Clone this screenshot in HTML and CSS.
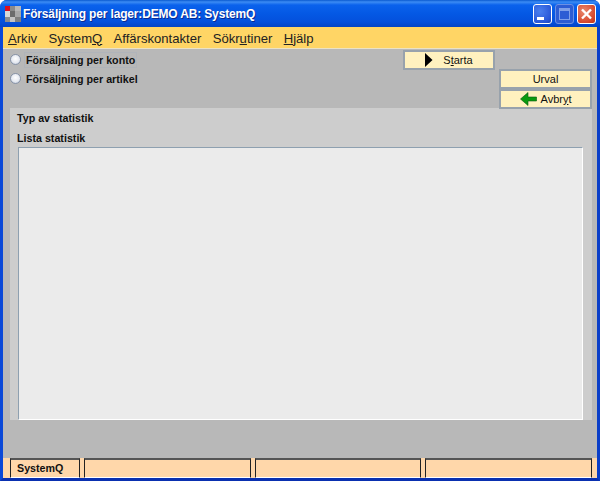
FILE: index.html
```html
<!DOCTYPE html>
<html lang="sv">
<head>
<meta charset="utf-8">
<title>Försäljning per lager</title>
<link rel="stylesheet" href="styles.css">
</head>
<body>
<div class="window">
  <header class="titlebar">
    <svg class="appicon" width="16" height="16" viewBox="0 0 16 16">
      <rect width="16" height="16" fill="#c4c4c4"/>
      <rect x="0" y="0" width="5" height="5" fill="#d81020"/>
      <rect x="5" y="0" width="5" height="5" fill="#8a8a8a"/>
      <rect x="10" y="0" width="6" height="5" fill="#b8b8b8"/>
      <rect x="0" y="5" width="5" height="6" fill="#d8d8d8"/>
      <rect x="5" y="5" width="5" height="6" fill="#6c6c6c"/>
      <rect x="10" y="5" width="6" height="6" fill="#a8a8a8"/>
      <rect x="0" y="11" width="5" height="5" fill="#8c8c8c"/>
      <rect x="5" y="11" width="5" height="5" fill="#c4c4c4"/>
      <rect x="10" y="11" width="6" height="5" fill="#808080"/>
    </svg>
    <span class="title">Försäljning per lager:DEMO AB: SystemQ</span>
    <div class="winbtns">
      <span class="winbtn"><svg width="19" height="20" viewBox="0 0 19 20"><rect x="4" y="13" width="7" height="3" fill="#fff"/></svg></span>
      <span class="winbtn disabled"><svg width="19" height="20" viewBox="0 0 19 20"><path d="M4 4h11v12H4z M5 7v8h9V7z" fill="#7f9fe8" fill-rule="evenodd"/></svg></span>
      <span class="winbtn close"><svg width="19" height="20" viewBox="0 0 19 20"><path d="M5 5.500L14 14.500M14 5.500L5 14.500" stroke="#fff" stroke-width="2.400"/></svg></span>
    </div>
  </header>
  <nav class="menubar">
    <span><u>A</u>rkiv</span>
    <span>System<u>Q</u></span>
    <span>Affärskontakter</span>
    <span>Sökr<u>u</u>tiner</span>
    <span><u>H</u>jälp</span>
  </nav>
  <main class="content">
    <section class="top">
      <div class="radios">
        <label class="radio"><i class="dot"></i><span class="focus">Försäljning per konto</span></label>
        <label class="radio"><i class="dot"></i><span>Försäljning per artikel</span></label>
      </div>
      <button class="btn starta"><svg width="8" height="14" viewBox="0 0 8 14"><path d="M0 0L7.500 7L0 14z" fill="#000"/></svg><span>S<u>t</u>arta</span></button>
      <div class="stack">
        <button class="btn">Urval</button>
        <button class="btn"><svg width="17" height="14" viewBox="0 0 17 14"><path d="M0.500 7L8 0.500V5H16.500V9H8V13.500z" fill="#0a9a10" stroke="#075a10" stroke-width=".6"/></svg><span>Avbr<u>y</u>t</span></button>
      </div>
    </section>
    <section class="panel">
      <div class="label first">Typ av statistik</div>
      <div class="label">Lista statistik</div>
      <div class="list"></div>
    </section>
    <footer class="status">
      <div class="cell">SystemQ</div>
      <div class="cell"></div>
      <div class="cell"></div>
      <div class="cell"></div>
    </footer>
  </main>
</div>
</body>
</html>
```
FILE: styles.css
```css
* { box-sizing: border-box; }
html, body { margin: 0; padding: 0; }
body { width: 600px; height: 481px; overflow: hidden; font-family: "Liberation Sans", Arial, sans-serif; }
.window {
  width: 600px; height: 481px; display: flex; flex-direction: column;
  background: #0a4be0;
  border-left: 3px solid #0a48d8; border-right: 3px solid #0a3ec8; border-bottom: 3px solid #0a30b0;
  border-radius: 7px 7px 0 0;
}
.titlebar {
  height: 27px; margin: 0 -3px; padding: 1px 4px 0 5px; display: flex; align-items: center; flex: none;
  border-radius: 7px 7px 0 0;
  background: linear-gradient(#0a5ad0 0, #3c8cf4 2px, #0a62ec 5px, #0458e4 14px, #0450dc 22px, #0444c4 27px);
}
.appicon { flex: none; margin-right: 2px; }
.title { color: #fff; font: bold 12px "Liberation Sans", sans-serif; text-shadow: 1px 1px 0 #0a2a90; white-space: nowrap; letter-spacing: -0.16px; }
.winbtns { margin-left: auto; display: flex; gap: 3px; }
.winbtn {
  width: 19px; height: 20px; display: block; border: 1px solid #fff; border-radius: 3px;
  background: radial-gradient(circle at 35% 35%, #4a80ee, #2a58d8 70%, #1c44b8);
}
.winbtn svg { display: block; margin: -1px; }
.winbtn.disabled { border-color: #6c90e4; background: #2c5cd4; }
.winbtn.close { background: radial-gradient(circle at 35% 35%, #e88a70, #d8482c 70%, #b83418); }
.menubar {
  height: 22px; flex: none; background: #ffd565; display: flex; align-items: center; gap: 11.3px;
  padding: 1px 0 0 5px; font-size: 13.1px; color: #222; border-bottom: 1px solid #ece2c4;
}
.content { flex: 1; min-height: 0; background: #b8b8b8; display: flex; flex-direction: column; }
.top { height: 59px; flex: none; display: flex; padding-left: 7px; position: relative; z-index: 1; }
.radios { display: flex; flex-direction: column; gap: 6px; padding-top: 4px; width: 393px; }
.radio { display: flex; align-items: center; height: 13px; font: bold 10.7px "Liberation Sans", sans-serif; color: #111; }
.dot {
  width: 11px; height: 11px; border-radius: 50%; border: 1px solid #8894a8; margin-right: 5px; flex: none;
  background: radial-gradient(circle at 50% 40%, #fff, #e4e8f0 60%, #a8b4cc);
}
.focus { outline: 1px solid #b0b4ba; outline-offset: 1px; }
.btn {
  width: 92px; height: 20px; margin: 0; padding: 0; display: flex; align-items: center; justify-content: center; gap: 4px;
  background: #fff1bf; border: 2px solid #98a2ac; font: 11px "Liberation Sans", sans-serif; color: #111;
}
.starta { margin-top: 1px; gap: 10px; flex: none; }
.stack { display: flex; flex-direction: column; margin: 20px 0 0 4px; height: 40px; }
.stack .btn { width: 93px; flex: none; }
.panel {
  height: 312px; flex: none; margin: 0 5px 0 7px; padding: 4px 8px 0 7px; background: #cdcdcd;
  display: flex; flex-direction: column;
}
.label { font: bold 10.7px "Liberation Sans", sans-serif; color: #111; height: 13px; line-height: 13px; margin-bottom: 7px; }
.list {
  flex: 1; margin: -5px 1px 0 1px; background: #ebebeb; border: 1px solid #8ea0b0;
  border-right-color: #fff; border-bottom-color: #fff;
}
.status {
  margin-top: auto; height: 20px; flex: none; display: grid; grid-template-columns: 70px 167px 166px 167px; gap: 4px; padding: 0 5px 0 7px;
  background: #ffd7aa;
}
.cell {
  background: #ffd7aa; border: 1px solid #222; border-top: 2px solid #555; border-bottom-color: #fff;
  font: bold 10.7px/17px "Liberation Sans", sans-serif; color: #111;
  height: 20px; padding-left: 6px;
}
```
